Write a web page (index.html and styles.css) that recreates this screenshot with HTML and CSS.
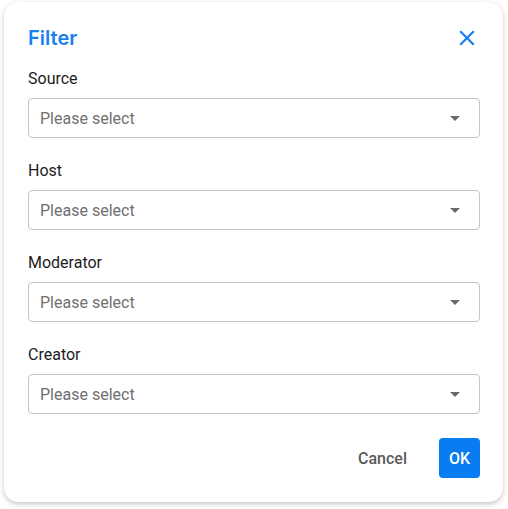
FILE: index.html
```html
<!DOCTYPE html>
<html lang="en">
<head>
    <meta charset="UTF-8">
    <meta name="viewport" content="width=device-width, initial-scale=1.0">
    <title>Filter</title>
    <link rel="stylesheet" href="styles.css">
</head>
<body>
    <div class="dialog">
        <div class="dialog-header">
            <h2>Filter</h2>
            <button class="close-btn" aria-label="Close">
                <svg width="16" height="16" viewBox="0 0 16 16">
                    <path d="M2 2 L14 14 M14 2 L2 14" stroke="#1a7ff0" stroke-width="2.2" stroke-linecap="square"/>
                </svg>
            </button>
        </div>

        <div class="field">
            <label>Source</label>
            <div class="select">
                <span>Please select</span>
                <span class="caret"></span>
            </div>
        </div>
        <div class="field">
            <label>Host</label>
            <div class="select">
                <span>Please select</span>
                <span class="caret"></span>
            </div>
        </div>
        <div class="field">
            <label>Moderator</label>
            <div class="select">
                <span>Please select</span>
                <span class="caret"></span>
            </div>
        </div>
        <div class="field">
            <label>Creator</label>
            <div class="select">
                <span>Please select</span>
                <span class="caret"></span>
            </div>
        </div>

        <div class="dialog-actions">
            <button class="cancel-btn">Cancel</button>
            <button class="ok-btn">OK</button>
        </div>
    </div>
</body>
</html>
```

FILE: styles.css
```css
body {
    font-family: Roboto, "Noto Sans", sans-serif;
    margin: 0;
    padding: 2px 5px 7px 4px;
    background-color: #fff;
}
.dialog {
    background-color: white;
    border-radius: 14px;
    box-shadow: 0 2px 5px rgba(0,0,0,0.22), 0 0 1px rgba(0,0,0,0.08);
    padding: 22px 23px 24px 24px;
}
.dialog-header {
    display: flex;
    justify-content: space-between;
    align-items: center;
    height: 28px;
}
h2 {
    margin: 0;
    font-family: Inter, Roboto, sans-serif;
    font-size: 20px;
    font-weight: 600;
    color: #1a7ff0;
    line-height: 28px;
}
.close-btn {
    background: none;
    border: none;
    padding: 0;
    margin-right: 5px;
    width: 16px;
    height: 16px;
    cursor: pointer;
    display: flex;
}
.field {
    display: flex;
    flex-direction: column;
    margin-top: 14px;
}
.field + .field {
    margin-top: 20px;
}
label {
    font-size: 16px;
    line-height: 24px;
    color: #1c1c1c;
    padding-top: 1px;
    margin-bottom: 7px;
}
.select {
    height: 40px;
    box-sizing: border-box;
    border: 1px solid #c4c4c4;
    border-radius: 4px;
    display: flex;
    align-items: center;
    justify-content: space-between;
    padding: 0 19px 0 11px;
    font-size: 16px;
    color: #707070;
}
.caret {
    width: 0;
    height: 0;
    border-left: 5px solid transparent;
    border-right: 5px solid transparent;
    border-top: 5px solid #6b6b6b;
}
.dialog-actions {
    display: flex;
    justify-content: flex-end;
    gap: 16px;
    margin-top: 24px;
}
.dialog-actions button {
    font-family: inherit;
    font-size: 16px;
    font-weight: 500;
    height: 40px;
    border: none;
    border-radius: 4px;
    cursor: pointer;
}
.cancel-btn {
    background: none;
    color: #5a5a5a;
    padding: 0 16px;
}
.ok-btn {
    background-color: #0a7cf2;
    color: white;
    width: 41px;
    padding: 0;
}
```
